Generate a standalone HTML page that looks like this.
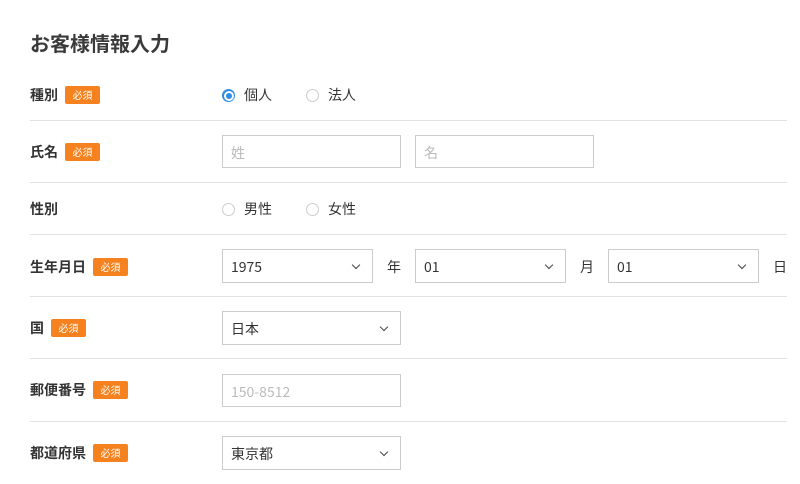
<!DOCTYPE html>
<html><head><meta charset="utf-8"><style>
body{margin:0;width:800px;height:484px;background:#fff;font-family:"Noto Sans CJK JP","Liberation Sans",sans-serif;color:#333;position:relative;overflow:hidden}
.a{position:absolute}
h1{position:absolute;left:30px;top:28px;margin:0;font-size:20px;font-weight:bold;color:#3a3a3a;line-height:30px}
.lbl{position:absolute;left:30px;font-size:14px;font-weight:bold;line-height:20px;display:flex;align-items:center}
.b{display:inline-block;background:#f5821f;color:#fff;font-size:10px;font-weight:normal;width:35px;text-align:center;height:18px;line-height:18px;border-radius:2px;margin-left:7px}
.line{position:absolute;left:30px;width:757px;height:1px;background:#e2e2e2}
.in{position:absolute;border:1px solid #ccc;box-sizing:border-box;font-size:14px;line-height:34px;padding-left:8px;color:#333}
.ph{color:#bbb}
.sel::after{content:"";position:absolute;right:13px;top:12px;width:5px;height:5px;border-right:1.5px solid #444;border-bottom:1.5px solid #444;transform:rotate(45deg)}
.t{position:absolute;font-size:14px;line-height:20px}
.r{position:absolute;width:13px;height:13px;border:1px solid #ccc;border-radius:50%;box-sizing:border-box}
</style></head><body>
<h1>お客様情報入力</h1>

<div class="lbl" style="top:85px">種別<span class="b">必須</span></div>
<div class="a" style="left:222px;top:89px;width:13px;height:13px;border-radius:50%;background:#2f8be6"></div>
<div class="a" style="left:223.5px;top:90.5px;width:10px;height:10px;border-radius:50%;background:#fff"></div>
<div class="a" style="left:225.5px;top:92.5px;width:6px;height:6px;border-radius:50%;background:#2f8be6"></div>
<div class="t" style="left:244px;top:85px">個人</div>
<div class="r" style="left:306px;top:89px"></div>
<div class="t" style="left:328px;top:85px">法人</div>
<div class="line" style="top:120px"></div>

<div class="lbl" style="top:142px">氏名<span class="b">必須</span></div>
<div class="in" style="left:222px;top:135px;width:179px;height:33px"><span class="ph">姓</span></div>
<div class="in" style="left:415px;top:135px;width:179px;height:33px"><span class="ph">名</span></div>
<div class="line" style="top:182px"></div>

<div class="lbl" style="top:199px">性別</div>
<div class="r" style="left:222px;top:203px"></div>
<div class="t" style="left:244px;top:199px">男性</div>
<div class="r" style="left:306px;top:203px"></div>
<div class="t" style="left:328px;top:199px">女性</div>
<div class="line" style="top:234px"></div>

<div class="lbl" style="top:257px">生年月日<span class="b">必須</span></div>
<div class="in sel" style="left:222px;top:249px;width:151px;height:34px">1975</div>
<div class="t" style="left:387px;top:257px">年</div>
<div class="in sel" style="left:415px;top:249px;width:151px;height:34px">01</div>
<div class="t" style="left:580px;top:257px">月</div>
<div class="in sel" style="left:608px;top:249px;width:151px;height:34px">01</div>
<div class="t" style="left:773px;top:257px">日</div>
<div class="line" style="top:296px"></div>

<div class="lbl" style="top:318px">国<span class="b">必須</span></div>
<div class="in sel" style="left:222px;top:311px;width:179px;height:34px">日本</div>
<div class="line" style="top:358px"></div>

<div class="lbl" style="top:380px">郵便番号<span class="b">必須</span></div>
<div class="in" style="left:222px;top:374px;width:179px;height:33px"><span class="ph">150-8512</span></div>
<div class="line" style="top:421px"></div>

<div class="lbl" style="top:443px">都道府県<span class="b">必須</span></div>
<div class="in sel" style="left:222px;top:436px;width:179px;height:34px">東京都</div>
</body></html>
